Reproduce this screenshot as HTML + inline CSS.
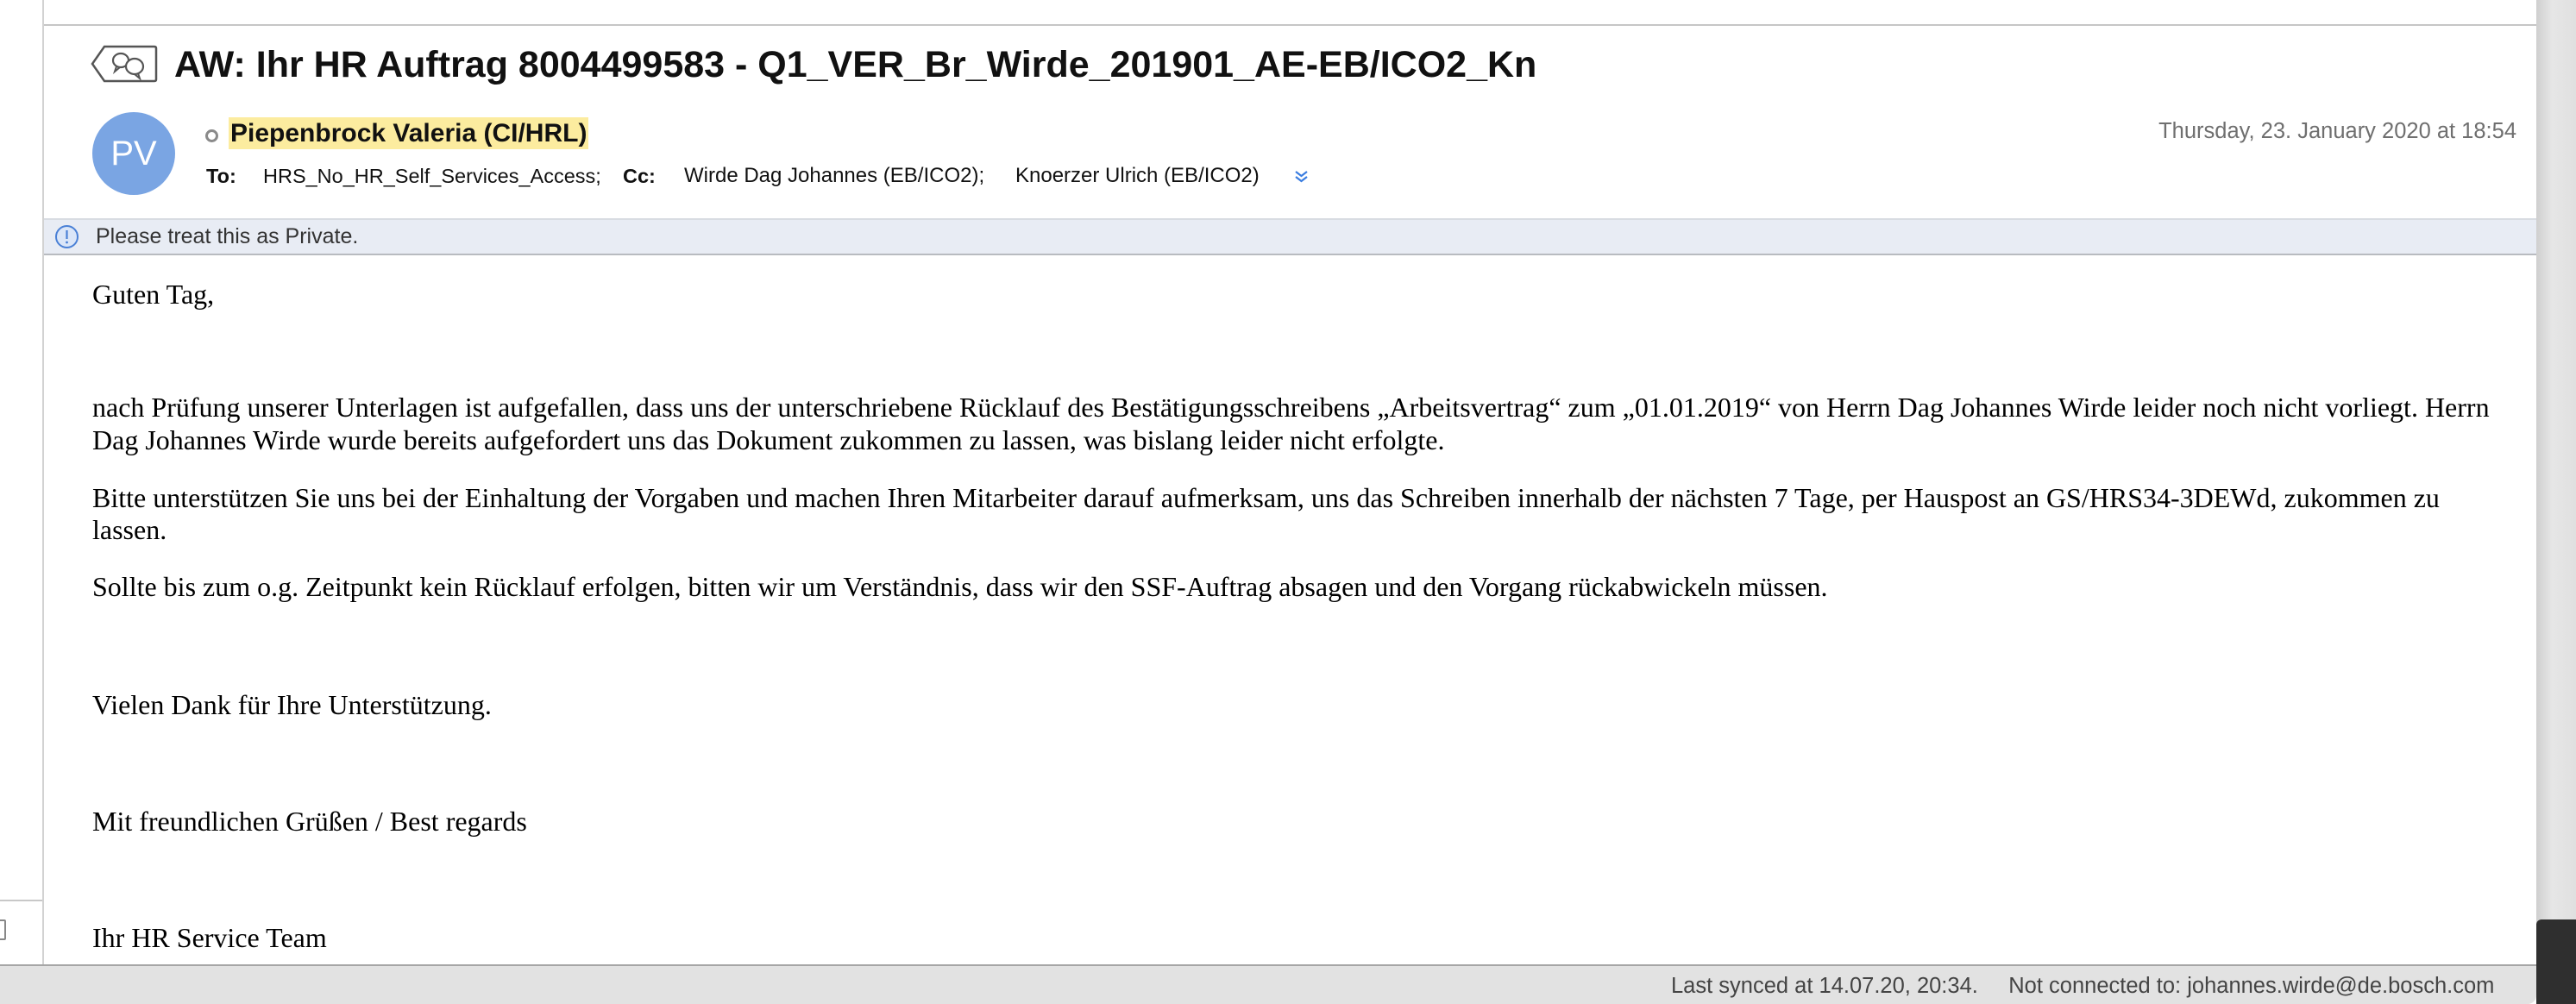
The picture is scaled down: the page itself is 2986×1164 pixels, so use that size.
<!DOCTYPE html>
<html><head><meta charset="utf-8"><style>
*{margin:0;padding:0;box-sizing:border-box}
body{width:2986px;height:1164px;position:relative;overflow:hidden;background:#fff;font-family:"Liberation Sans",Arial,sans-serif}
.a{position:absolute;white-space:nowrap}
.b{position:absolute;left:107px;font-family:"Liberation Serif","Times New Roman",serif;font-size:32px;line-height:38px;color:#000;white-space:nowrap}
</style></head><body>
<div class="a" style="left:49px;top:0;width:2px;height:1118px;background:#d2d2d2"></div>
<div class="a" style="left:0;top:1043px;width:49px;height:2px;background:#c8c8c8"></div>
<div class="a" style="left:-6px;top:1066px;width:13px;height:24px;border:2px solid #888;border-radius:2px"></div>
<div class="a" style="left:51px;top:28px;width:2889px;height:2px;background:#c6c6c6"></div>

<svg class="a" style="left:105px;top:52px" width="78" height="44" viewBox="0 0 78 44">
<path d="M16 2 H74 Q76 2 76 4 V40 Q76 42 74 42 H16 L2 22 Z" fill="none" stroke="#555" stroke-width="2.5"/>
<ellipse cx="35" cy="18" rx="9" ry="8" fill="none" stroke="#555" stroke-width="2.2"/>
<path d="M30 25 L28 31 L34 26" fill="none" stroke="#555" stroke-width="2"/>
<ellipse cx="51" cy="25" rx="10" ry="9" fill="#fff" stroke="#555" stroke-width="2.2"/>
<path d="M55 33 L57 39 L51 34" fill="none" stroke="#555" stroke-width="2"/>
</svg>
<div class="a" style="left:202px;top:50px;font-size:43px;font-weight:bold;color:#111;line-height:50px">AW: Ihr HR Auftrag 8004499583 - Q1_VER_Br_Wirde_201901_AE-EB/ICO2_Kn</div>

<div class="a" style="left:107px;top:130px;width:96px;height:96px;border-radius:50%;background:#7aa5e3;color:#fff;font-size:40px;line-height:96px;text-align:center">PV</div>
<div class="a" style="left:238px;top:150px;width:15px;height:15px;border-radius:50%;border:3px solid #8a8a8a"></div>
<div class="a" style="left:265px;top:136px;height:37px;background:#fcec9f;font-size:30px;font-weight:bold;line-height:37px;padding:0 2px;color:#111">Piepenbrock Valeria (CI/HRL)</div>
<div class="a" style="left:2417px;top:138px;font-size:25.5px;color:#6f6f6f;line-height:28px;width:500px;text-align:right">Thursday, 23. January 2020 at 18:54</div>

<div class="a" style="left:239px;top:190px;font-size:23.5px;line-height:28px;color:#111"><b>To:</b></div>
<div class="a" style="left:305px;top:190px;font-size:23.5px;line-height:28px;color:#111">HRS_No_HR_Self_Services_Access;</div>
<div class="a" style="left:722px;top:190px;font-size:23.5px;line-height:28px;color:#111"><b>Cc:</b></div>
<div class="a" style="left:793px;top:190px;font-size:24px;line-height:28px;color:#111">Wirde Dag Johannes (EB/ICO2);</div>
<div class="a" style="left:1177px;top:190px;font-size:24px;line-height:28px;color:#111">Knoerzer Ulrich (EB/ICO2)</div>
<svg class="a" style="left:1500px;top:196px" width="17" height="17" viewBox="0 0 17 17"><path d="M2 3 L8.5 8 L15 3 M2 9 L8.5 14 L15 9" fill="none" stroke="#3a7de0" stroke-width="2.2"/></svg>

<div class="a" style="left:51px;top:253px;width:2889px;height:43px;background:#e8ecf4;border-top:2px solid #d8dce2;border-bottom:2px solid #b8bbc0"></div>
<svg class="a" style="left:63px;top:260px" width="29" height="29" viewBox="0 0 29 29"><circle cx="14.5" cy="14.5" r="12.5" fill="#dbe6f8" stroke="#4a80d6" stroke-width="2"/><path d="M14.5 7 V17" stroke="#4a80d6" stroke-width="2.2"/><circle cx="14.5" cy="21" r="1.4" fill="#4a80d6"/></svg>
<div class="a" style="left:111px;top:260px;font-size:25px;line-height:28px;color:#333">Please treat this as Private.</div>

<div class="b" style="top:322px">Guten Tag,</div>
<div class="b" style="top:453px">nach Prüfung unserer Unterlagen ist aufgefallen, dass uns der unterschriebene Rücklauf des Bestätigungsschreibens „Arbeitsvertrag“ zum „01.01.2019“ von Herrn Dag Johannes Wirde leider noch nicht vorliegt. Herrn</div>
<div class="b" style="top:491px">Dag Johannes Wirde wurde bereits aufgefordert uns das Dokument zukommen zu lassen, was bislang leider nicht erfolgte.</div>
<div class="b" style="top:558px">Bitte unterstützen Sie uns bei der Einhaltung der Vorgaben und machen Ihren Mitarbeiter darauf aufmerksam, uns das Schreiben innerhalb der nächsten 7 Tage, per Hauspost an GS/HRS34-3DEWd, zukommen zu</div>
<div class="b" style="top:595px">lassen.</div>
<div class="b" style="top:661px">Sollte bis zum o.g. Zeitpunkt kein Rücklauf erfolgen, bitten wir um Verständnis, dass wir den SSF-Auftrag absagen und den Vorgang rückabwickeln müssen.</div>
<div class="b" style="top:798px">Vielen Dank für Ihre Unterstützung.</div>
<div class="b" style="top:933px">Mit freundlichen Grüßen / Best regards</div>
<div class="b" style="top:1068px">Ihr HR Service Team</div>

<div class="a" style="left:2940px;top:0;width:46px;height:1164px;background:linear-gradient(90deg,#cfcfcf,#e6e6e6 40%,#e0e0e0)"></div>
<div class="a" style="left:2940px;top:1066px;width:46px;height:98px;background:#2f2f2f;border-top-left-radius:6px"></div>
<div class="a" style="left:0;top:1118px;width:2940px;height:46px;background:#e2e2e2;border-top:2px solid #a6a6a6;border-bottom-right-radius:10px"></div>
<div class="a" style="left:1937px;top:1129px;font-size:25.5px;line-height:28px;color:#444">Last synced at 14.07.20, 20:34.&nbsp;&nbsp;&nbsp;&nbsp;&nbsp;Not connected to: johannes.wirde@de.bosch.com</div>
</body></html>
